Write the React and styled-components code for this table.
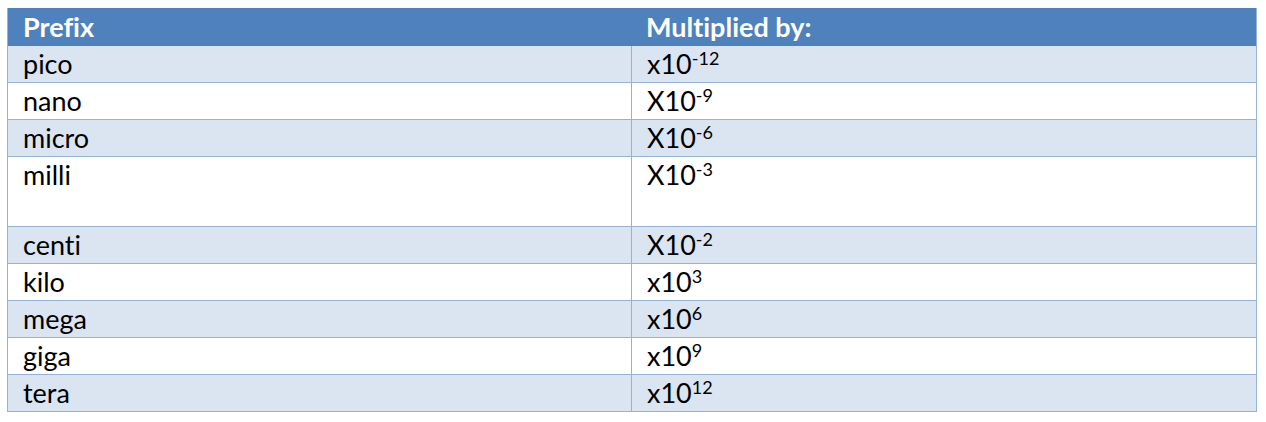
import styled, { createGlobalStyle } from "styled-components";

const GlobalStyle = createGlobalStyle`
    body {
        margin: 0;
        background: #ffffff;
        font-family: Lato, "Liberation Sans", sans-serif;
        font-variant-ligatures: none;
        font-feature-settings: "liga" 0, "clig" 0;
    }
`;

const Page = styled.div`
    padding: 8px 0 0 7px;
`;

const Table = styled.div`
    width: 1250px;
    border-left: 1px solid #95b3d7;
    border-right: 1px solid #95b3d7;
    box-sizing: border-box;
`;

const Row = styled.div`
    display: grid;
    grid-template-columns: 623px 1fr;
    height: ${(p) => p.$height || 36}px;
    background: ${(p) => (p.$striped ? "#dbe5f1" : "#ffffff")};
    border-bottom: 1px solid #95b3d7;
`;

const HeaderRow = styled.div`
    display: grid;
    grid-template-columns: 623px 1fr;
    height: 38px;
    background: #4f81bd;
`;

const Cell = styled.div`
    padding: 3px 0 0 15px;
    font-size: 27px;
    line-height: 30px;
    color: #000000;
    & + & {
        border-left: 1px solid #95b3d7;
    }
`;

const HeadCell = styled.div`
    padding: 4px 0 0 15px;
    font-size: 27px;
    line-height: 30px;
    font-weight: 700;
    color: #ffffff;
`;

const Sup = styled.sup`
    font-size: 18px;
    line-height: 0;
    vertical-align: 9px;
`;

const rows = [
    { prefix: "pico", base: "x10", exp: "-12" },
    { prefix: "nano", base: "X10", exp: "-9" },
    { prefix: "micro", base: "X10", exp: "-6" },
    { prefix: "milli", base: "X10", exp: "-3", height: 69 },
    { prefix: "centi", base: "X10", exp: "-2" },
    { prefix: "kilo", base: "x10", exp: "3" },
    { prefix: "mega", base: "x10", exp: "6" },
    { prefix: "giga", base: "x10", exp: "9" },
    { prefix: "tera", base: "x10", exp: "12" },
];

const App = () => {
    return (
        <>
            <GlobalStyle />
            <Page>
                <Table>
                    <HeaderRow>
                        <HeadCell>Prefix</HeadCell>
                        <HeadCell>Multiplied by:</HeadCell>
                    </HeaderRow>
                    {rows.map((r, i) => (
                        <Row key={r.prefix} $striped={i % 2 === 0} $height={r.height}>
                            <Cell>{r.prefix}</Cell>
                            <Cell>
                                {r.base}
                                <Sup>{r.exp}</Sup>
                            </Cell>
                        </Row>
                    ))}
                </Table>
            </Page>
        </>
    );
};

export default App;
